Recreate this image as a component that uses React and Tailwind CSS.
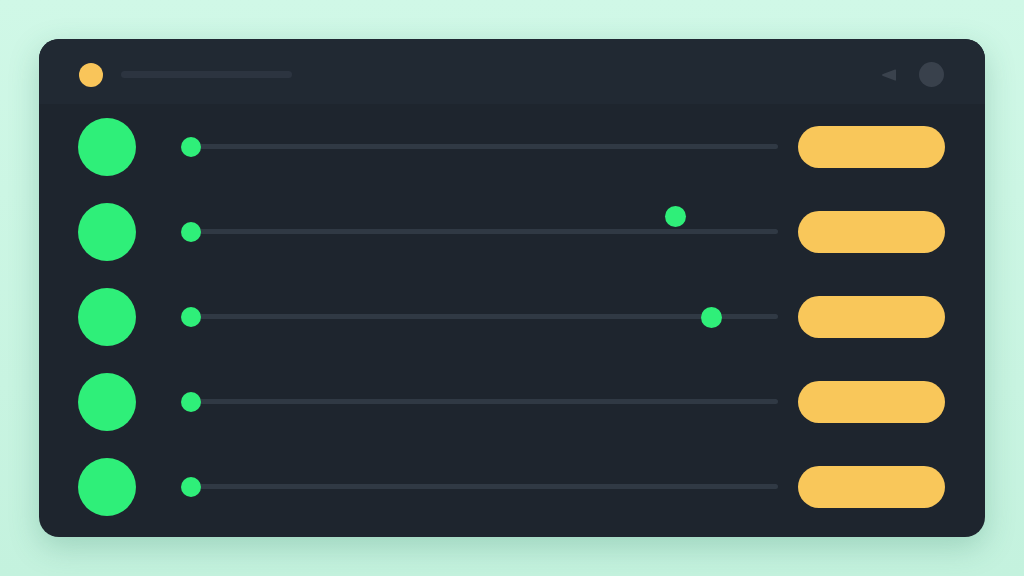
import React from "react";

const rows = [
  { extra: null },
  { extra: { left: 484, top: -16 } },
  { extra: { left: 520, top: 0 } },
  { extra: null },
  { extra: null },
];

export default function App() {
  return (
    <div className="w-[1024px] h-[576px] bg-gradient-to-b from-[#d0f8e7] to-[#c4f2de] pt-[39px] px-[39px]">
      <div className="w-[946px] h-[498px] rounded-[20px] bg-[#1e252e] overflow-hidden shadow-[0_10px_30px_rgba(40,120,90,0.25)]">
        {/* header */}
        <div className="h-[65px] bg-[#212933] flex items-center pt-[6px] pl-[40px] pr-[41px]">
          <div className="w-[24px] h-[24px] rounded-full bg-[#f9c55a]" />
          <div className="ml-[18px] w-[171px] h-[7px] rounded-full bg-[#2c3440]" />
          <div className="flex-1" />
          <svg width="17" height="16" viewBox="0 0 17 16" className="mr-[22px]">
            <path d="M15 2.5 Q16 2 16 3.5 L16 12.5 Q16 14 15 13.5 L3 9 Q1 8 3 7 Z" fill="#3a424d" />
          </svg>
          <div className="w-[25px] h-[25px] rounded-full bg-[#39414c]" />
        </div>
        {/* rows */}
        <div className="flex flex-col">
          {rows.map((r, i) => (
            <div key={i} className="h-[85px] flex items-center pl-[39px] pr-[40px]">
              <div className="w-[58px] h-[58px] rounded-full bg-[#2fef79] shrink-0" />
              <div className="ml-[45px] flex-1 relative h-[20px] flex items-center">
                <div className="ml-[10px] flex-1 h-[5px] rounded-full bg-[#303944]" />
                <div className="absolute left-0 top-0 w-[20px] h-[20px] rounded-full bg-[#2fef79]" />
                {r.extra && (
                  <div
                    className="absolute w-[21px] h-[21px] rounded-full bg-[#2fef79]"
                    style={{ left: r.extra.left, top: r.extra.top }}
                  />
                )}
              </div>
              <div className="ml-[20px] w-[147px] h-[42px] rounded-full bg-[#f9c75a] shrink-0" />
            </div>
          ))}
        </div>
      </div>
    </div>
  );
}
